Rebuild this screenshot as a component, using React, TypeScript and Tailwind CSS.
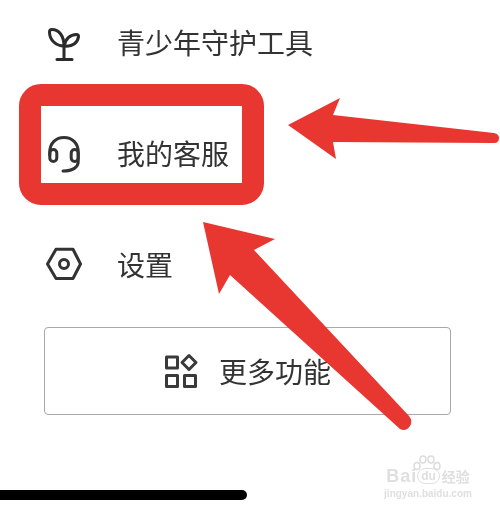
const cjk = "font-['Noto_Sans_CJK_SC','Noto_Sans',sans-serif]"

function Sprout() {
	return (
		<svg width="36" height="38" viewBox="0 0 36 38" fill="none" stroke="#2b2b2b" strokeWidth="3" strokeLinecap="round" strokeLinejoin="round">
			<path d="M18 23V36.500" />
			<path d="M11 36.500H26" />
			<path d="M18 23C18 13 13 6.500 6 6.500Q3.500 6.500 3.500 9C3.500 17 10 23 18 23Z" />
			<path d="M18.500 23C19 16 24 11.500 30.500 11.500Q32.500 11.500 32.500 13.500C32 19 27 24 18.500 23Z" />
		</svg>
	)
}

function Headset() {
	return (
		<svg width="36" height="40" viewBox="0 0 36 40" fill="none" stroke="#333" strokeWidth="3" strokeLinecap="round" strokeLinejoin="round">
			<path d="M3.800 22V19C3.800 10 10 4.500 18 4.500C26 4.500 32.200 10 32.200 19V29C32.200 34 27 38 17 38" />
			<rect x="3.800" y="16.500" width="7" height="12" rx="3.500" />
			<rect x="25.200" y="16.500" width="7" height="12" rx="3.500" />
		</svg>
	)
}

function Hexagon() {
	return (
		<svg width="38" height="36" viewBox="0 0 38 36" fill="none" stroke="#333" strokeWidth="3" strokeLinejoin="round">
			<path d="M11 3.200H28L35.500 18L28 32.500H11L2.500 18Z" />
			<circle cx="19" cy="18" r="4.500" />
		</svg>
	)
}

function Grid() {
	return (
		<svg width="36" height="36" viewBox="0 0 36 36" fill="none" stroke="#3a3a3a" strokeWidth="3" strokeLinejoin="round">
			<rect x="2.500" y="4" width="11" height="11" />
			<rect x="2.500" y="22.500" width="11" height="11" />
			<rect x="20.500" y="22.500" width="11" height="11" />
			<path d="M25 2.500L32 9.500L25 16.500L18 9.500Z" />
		</svg>
	)
}

function Row(props: { icon: React.ReactNode; label: string }) {
	return (
		<div className="flex h-[74px] items-center">
			<div className="mr-[33px] flex w-[40px] justify-center">{props.icon}</div>
			<span className="text-[28px] leading-none text-[#333]">{props.label}</span>
		</div>
	)
}

function Watermark() {
	return (
		<div className="absolute left-[382px] top-[454px] flex h-[44px] w-[92px] flex-col items-center font-['Liberation_Sans',sans-serif] text-[#dfdfdf] blur-[0.7px]">
			<svg className="absolute left-[31px] top-[1px]" width="28" height="18" viewBox="0 0 28 18" fill="none" stroke="#dcdcdc" strokeWidth="1.500">
				<ellipse cx="4" cy="11" rx="3" ry="3.500" />
				<ellipse cx="10" cy="4.500" rx="3" ry="3.500" />
				<ellipse cx="18" cy="4.500" rx="3" ry="3.500" />
				<ellipse cx="24" cy="11" rx="3" ry="3.500" />
			</svg>
			<div className="mt-[13px] flex items-center text-[18px] font-bold leading-none">
				<span className="tracking-[1px]">Bai</span>
				<span className="rounded-full border border-[#dfdfdf] px-[3px] text-[12px] leading-[14px]">du</span>
				<span className={`${cjk} ml-[2px] text-[14px]`}>经验</span>
			</div>
			<div className="mt-[4px] text-[10px] font-bold leading-none">jingyan.baidu.com</div>
		</div>
	)
}

export default function App() {
	return (
		<div className={`relative h-[509px] w-[500px] overflow-hidden bg-white pl-[44px] pt-[5px] blur-[0.3px] ${cjk}`}>
			<div className="flex flex-col gap-[37px]">
				<Row icon={<Sprout />} label="青少年守护工具" />
				<Row icon={<Headset />} label="我的客服" />
				<Row icon={<Hexagon />} label="设置" />
			</div>
			<div className="mt-[26px] flex h-[88px] w-[407px] items-center justify-center gap-[19px] rounded-[4px] border border-[#a8a8a8]">
				<Grid />
				<span className="text-[28px] leading-none text-[#333]">更多功能</span>
			</div>
			<div className="absolute bottom-[9px] left-0 h-[10px] w-[247px] rounded-r-full bg-black" />

			{/* annotations drawn on top of the screenshot */}
			<div className="absolute left-[19px] top-[84px] h-[121px] w-[245px] rounded-[22px] border-[22px] border-[#e83631]" />
			<svg className="absolute left-0 top-0" width="500" height="509" viewBox="0 0 500 509" fill="#e83631">
				<path d="M288 125L340 98L333 115L494 133Q499 134 499 138Q499 143 494 143L333 142L336 159Z" />
				<path d="M203 222L275 239L254 250L409 416Q413 421 410 426Q406 432 400 429L230 275L219 294Z" />
			</svg>
			<Watermark />
		</div>
	)
}
